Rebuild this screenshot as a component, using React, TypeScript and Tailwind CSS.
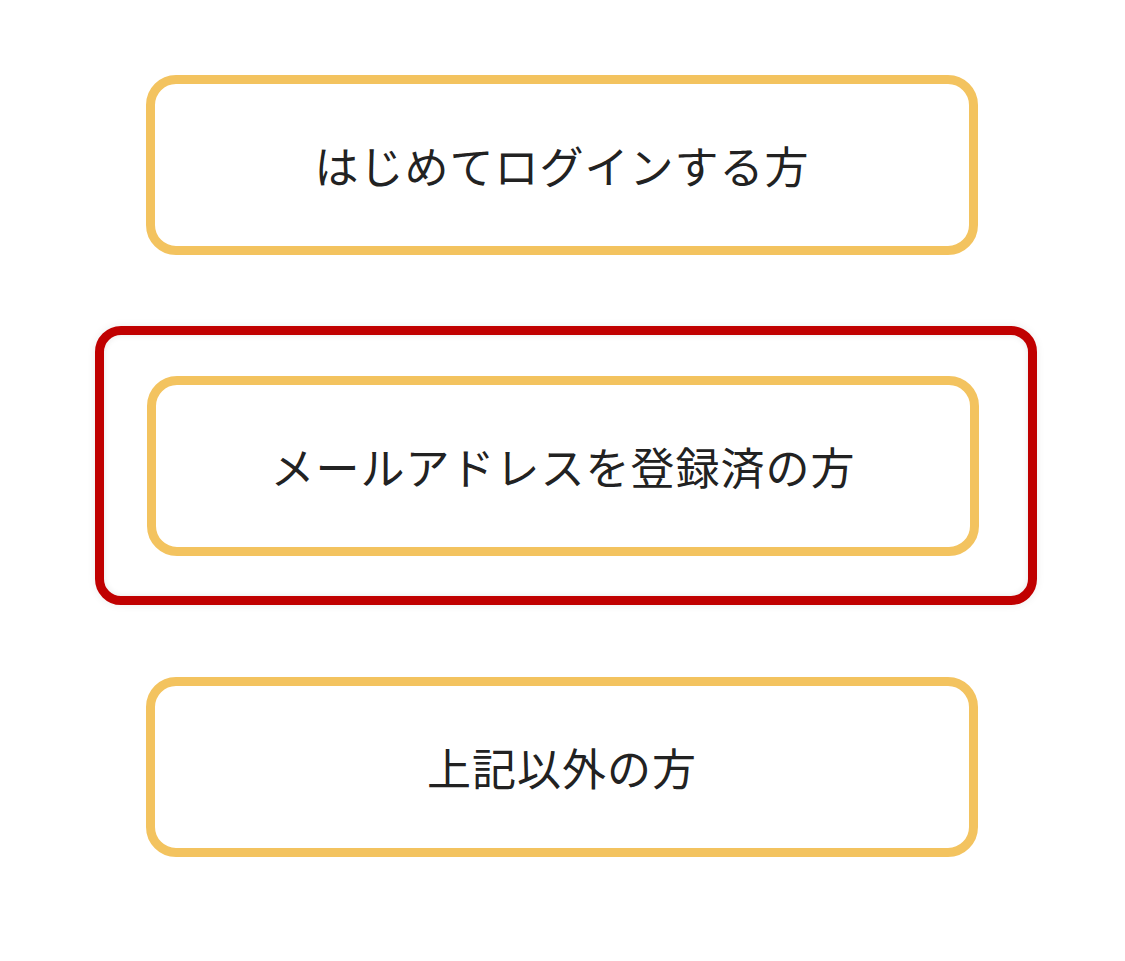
const OPTIONS = [
  { id: "first", label: "はじめてログインする方" },
  { id: "registered", label: "メールアドレスを登録済の方", selected: true },
  { id: "other", label: "上記以外の方" },
];

function OptionButton({ label }: { label: string }) {
  return (
    <button className="flex h-[180px] w-[832px] items-center justify-center rounded-[30px] border-[9px] border-[#f3c35f] bg-white text-[44px] font-normal tracking-[1px] text-[#222222]">
      {label}
    </button>
  );
}

export default function App() {
  return (
    <div
      className="min-h-[961px] w-[1125px] bg-white pt-[75px]"
      style={{ fontFamily: '"Noto Sans CJK JP", "Noto Sans", sans-serif' }}
    >
      <div className="flex flex-col items-start">
        {OPTIONS.map((o, i) => (
          <div key={o.id} className={i > 0 ? (o.selected ? "mt-[71px]" : "mt-[72px]") : ""}>
            {o.selected ? (
              <div className="ml-[95px] w-[942px] rounded-[26px] border-[9px] border-[#c00000] pb-[40px] pl-[43px] pt-[41px] shadow-[0_0_8px_rgba(0,0,0,0.08),inset_0_0_6px_rgba(0,0,0,0.1)]">
                <OptionButton label={o.label} />
              </div>
            ) : (
              <div className="ml-[146px]">
                <OptionButton label={o.label} />
              </div>
            )}
          </div>
        ))}
      </div>
    </div>
  );
}
